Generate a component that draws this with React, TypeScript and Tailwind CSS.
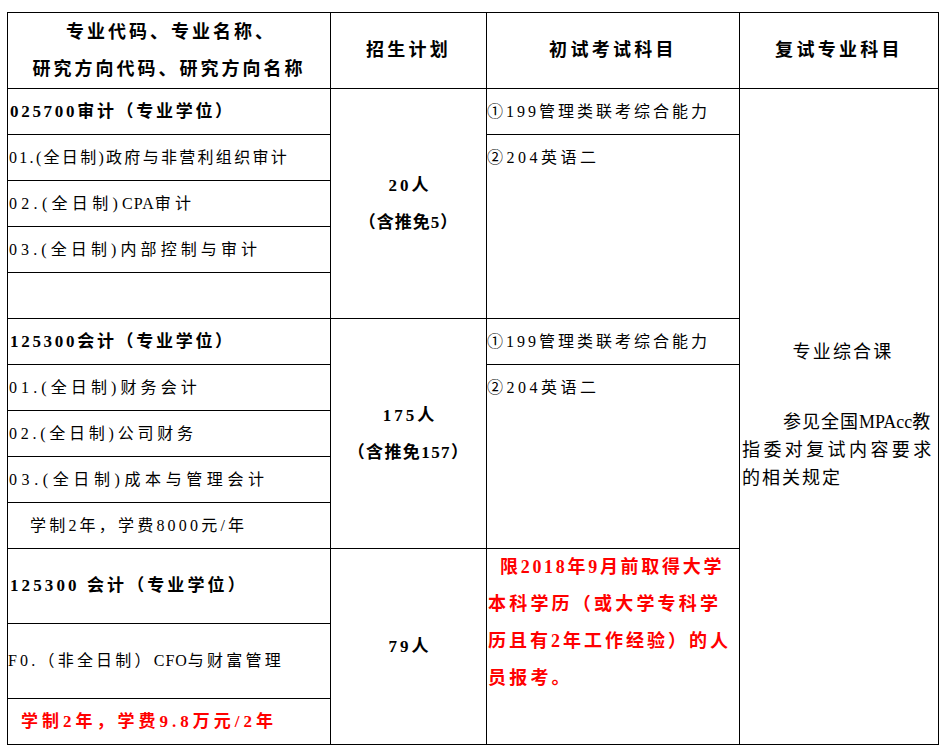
import React from "react";

const cell = "bg-white";

export default function App() {
  return (
    <div className="w-[950px] h-[752px] bg-white pt-[12px] pl-[7px]">
      <div className="grid w-[932px] grid-cols-[322px_155px_252px_198px] grid-rows-[75px_repeat(10,45px)_74px_74px_45px] gap-px bg-black p-px text-black font-['Liberation_Serif','Noto_Sans_CJK_SC',serif]">
        {/* Header */}
        <div className={`${cell} col-start-1 row-start-1 flex flex-col items-center justify-center text-[18px] font-bold leading-[37px] tracking-[3px]`}>
          <div className="pl-[4px]">专业代码、专业名称、</div>
          <div>研究方向代码、研究方向名称</div>
        </div>
        <div className={`${cell} col-start-2 row-start-1 flex items-center justify-center text-[18px] font-bold tracking-[3.3px]`}>
          招生计划
        </div>
        <div className={`${cell} col-start-3 row-start-1 flex items-center justify-center text-[18px] font-bold tracking-[3.3px]`}>
          初试考试科目
        </div>
        <div className={`${cell} col-start-4 row-start-1 flex items-center justify-center text-[18px] font-bold tracking-[3.3px]`}>
          复试专业科目
        </div>

        {/* Column 1 - group 1 */}
        <div className={`${cell} col-start-1 row-start-2 flex items-center pl-[2px] text-[17px] font-bold tracking-[2.7px]`}>
          025700审计（专业学位）
        </div>
        <div className={`${cell} col-start-1 row-start-3 flex items-center pl-[1px] text-[16px] tracking-[2.3px]`}>
          01.(全日制)政府与非营利组织审计
        </div>
        <div className={`${cell} col-start-1 row-start-4 flex items-center pl-[1px] text-[16px] tracking-[4.3px]`}>
          02.(全日制)<span className="tracking-[1px]">CPA</span>审计
        </div>
        <div className={`${cell} col-start-1 row-start-5 flex items-center pl-[1px] text-[16px] tracking-[4.1px]`}>
          03.(全日制)内部控制与审计
        </div>
        <div className={`${cell} col-start-1 row-start-6`} />

        {/* Column 1 - group 2 */}
        <div className={`${cell} col-start-1 row-start-7 flex items-center pl-[2px] text-[17px] font-bold tracking-[2.7px]`}>
          125300会计（专业学位）
        </div>
        <div className={`${cell} col-start-1 row-start-8 flex items-center pl-[1px] text-[16px] tracking-[4.1px]`}>
          01.(全日制)财务会计
        </div>
        <div className={`${cell} col-start-1 row-start-9 flex items-center pl-[1px] text-[16px] tracking-[3.75px]`}>
          02.(全日制)公司财务
        </div>
        <div className={`${cell} col-start-1 row-start-10 flex items-center pl-[1px] text-[16px] tracking-[4.6px]`}>
          03.(全日制)成本与管理会计
        </div>
        <div className={`${cell} col-start-1 row-start-11 flex items-center pl-[22px] text-[16px] tracking-[3.2px]`}>
          学制2年，学费8000元/年
        </div>

        {/* Column 1 - group 3 */}
        <div className={`${cell} col-start-1 row-start-12 flex items-center pl-[2px] text-[17px] font-bold tracking-[3.1px]`}>
          125300 会计（专业学位）
        </div>
        <div className={`${cell} col-start-1 row-start-13 flex items-center text-[16px] tracking-[3.2px]`}>
          F0.（非全日制）<span className="tracking-[1px]">CFO</span>与财富管理
        </div>
        <div className={`${cell} col-start-1 row-start-14 flex items-center pl-[13px] text-[17px] font-bold tracking-[4px] text-[#ff0000]`}>
          学制2年，学费9.8万元/2年
        </div>

        {/* Column 2 */}
        <div className={`${cell} col-start-2 row-start-2 row-span-5 flex flex-col items-center justify-center text-[17px] font-bold leading-[37px]`}>
          <div className="tracking-[3px] pl-[3px]">20人</div>
          <div className="tracking-[1px]">（含推免5）</div>
        </div>
        <div className={`${cell} col-start-2 row-start-7 row-span-5 flex flex-col items-center justify-center text-[17px] font-bold leading-[37px]`}>
          <div className="tracking-[3px] pl-[3px]">175人</div>
          <div className="tracking-[1.4px]">（含推免157）</div>
        </div>
        <div className={`${cell} col-start-2 row-start-12 row-span-3 flex items-center justify-center text-[17px] font-bold tracking-[3px] pl-[3px]`}>
          79人
        </div>

        {/* Column 3 */}
        <div className={`${cell} col-start-3 row-start-2 flex items-center text-[16px] tracking-[3px]`}>
          ①199管理类联考综合能力
        </div>
        <div className={`${cell} col-start-3 row-start-3 row-span-4 text-[16px] tracking-[3.5px]`}>
          <div className="h-[45px] flex items-center">②204英语二</div>
        </div>
        <div className={`${cell} col-start-3 row-start-7 flex items-center text-[16px] tracking-[3px]`}>
          ①199管理类联考综合能力
        </div>
        <div className={`${cell} col-start-3 row-start-8 row-span-4 text-[16px] tracking-[3.5px]`}>
          <div className="h-[45px] flex items-center">②204英语二</div>
        </div>
        <div className={`${cell} col-start-3 row-start-12 row-span-3 pl-[1px] text-[18px] font-bold leading-[37px] text-[#ff0000]`}>
          <div className="pl-[12px] tracking-[2.7px]">限2018年9月前取得大学</div>
          <div className="tracking-[3.2px]">本科学历（或大学专科学</div>
          <div className="tracking-[3px]">历且有2年工作经验）的人</div>
          <div className="tracking-[3.2px]">员报考。</div>
        </div>

        {/* Column 4 */}
        <div className={`${cell} col-start-4 row-start-2 row-span-13 flex flex-col justify-center pb-[4px] text-[18px] leading-[28px] whitespace-nowrap`}>
          <div className="text-center pl-[8px] tracking-[2.2px]">专业综合课</div>
          <div className="h-[42px]" />
          <div className="pl-[43px] tracking-[1px]">参见全国<span className="tracking-[0px]">MPAcc</span>教</div>
          <div className="pl-[2px] tracking-[3.4px]">指委对复试内容要求</div>
          <div className="pl-[2px] tracking-[2px]">的相关规定</div>
        </div>
      </div>
    </div>
  );
}
